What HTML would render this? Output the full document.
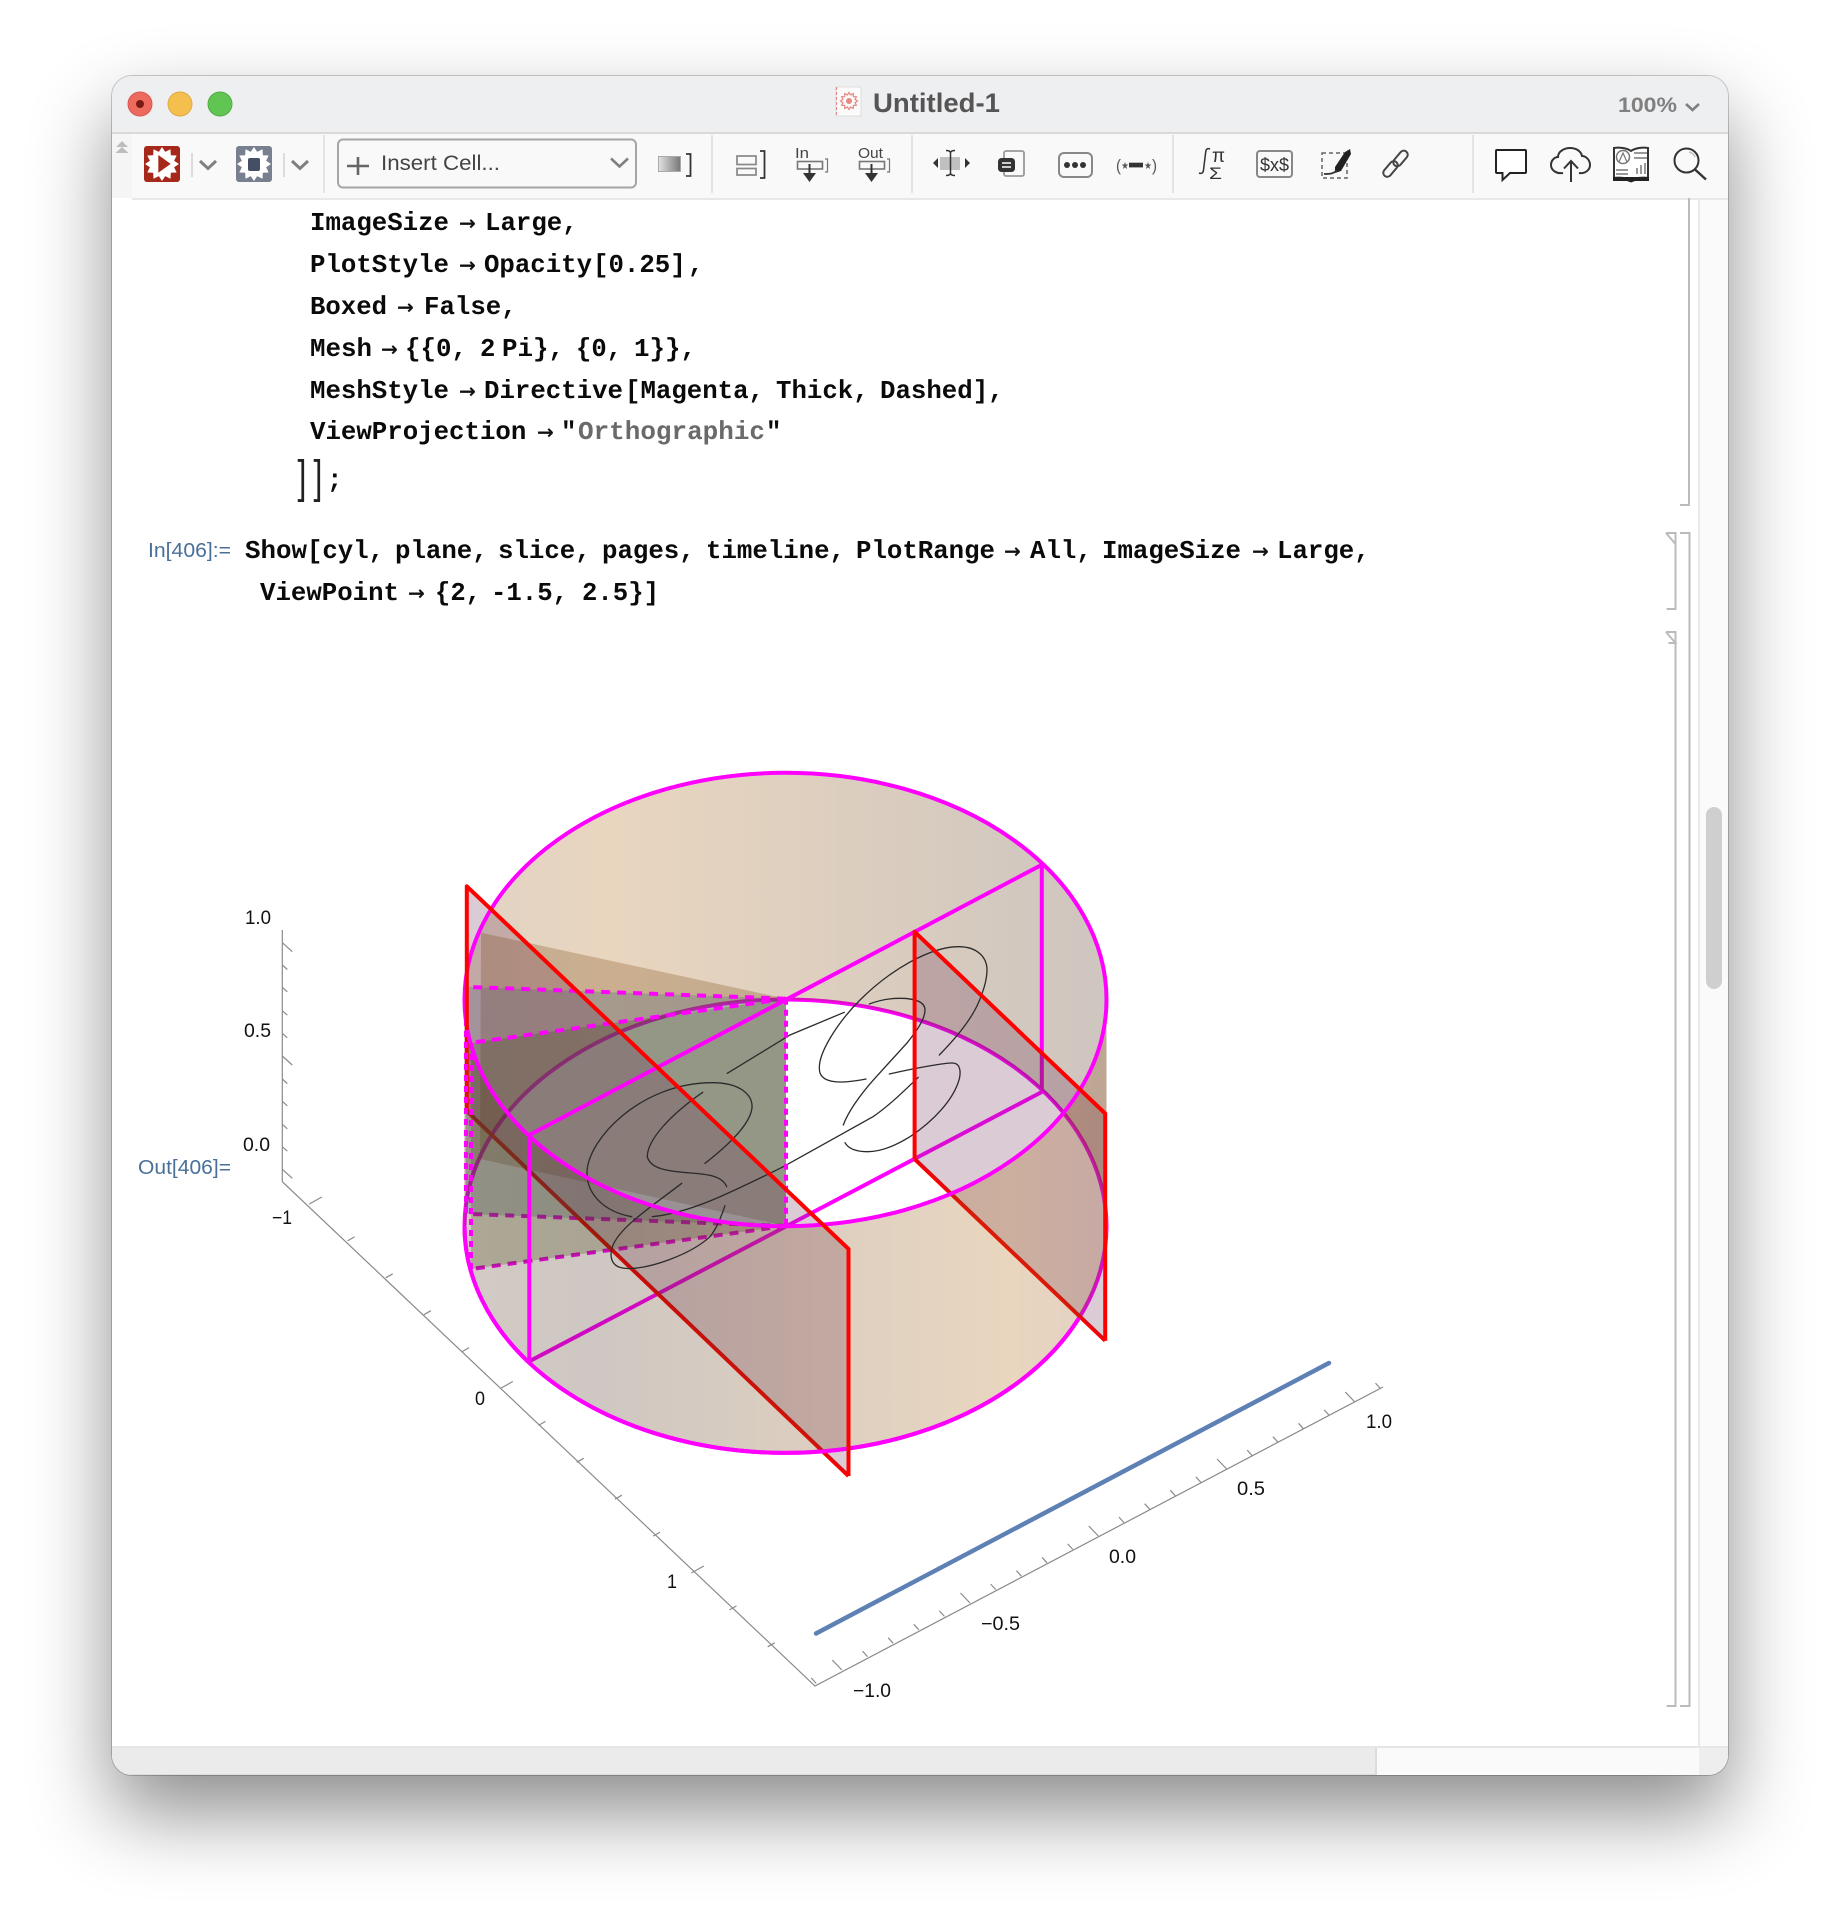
<!DOCTYPE html>
<html><head><meta charset="utf-8"><title>Untitled-1</title>
<style>
html,body{margin:0;padding:0;background:#fff;width:1840px;height:1924px;overflow:hidden}
.win{position:absolute;left:112px;top:76px;width:1616px;height:1699px;border-radius:20px;box-shadow:0 38px 80px rgba(0,0,0,.45),0 0 0 1px rgba(0,0,0,.2);background:#fff;overflow:hidden}
.win div{position:absolute}
svg{position:absolute;left:0;top:0}
.c{font:700 25.7px "Liberation Mono",monospace;fill:#0a0a0a}
.a{font:700 20px "DejaVu Sans",sans-serif;fill:#111}
.l{font:400 20px "Liberation Sans",sans-serif;fill:#4a7099}
.t{font:400 19px "Liberation Sans",sans-serif;fill:#111}
</style></head><body>
<div class="win">
<div style="left:0;top:0;width:1616px;height:56px;background:#eeeff1;border-bottom:2px solid #d9d9d9"></div>
<div style="left:0;top:58px;width:20px;height:64px;background:#f5f5f5"></div>
<div style="left:20px;top:58px;width:1596px;height:64px;background:#f9f9f9"></div>
<div style="left:20px;top:122px;width:1596px;height:2px;background:#e8e8e8"></div>
<div style="left:1586px;top:124px;width:2px;height:1548px;background:#e9e9e9"></div>
<div style="left:1588px;top:124px;width:28px;height:1548px;background:#fafafa"></div>
<div style="left:1594px;top:731px;width:16px;height:182px;border-radius:8px;background:#cfcfcf"></div>
<div style="left:0;top:1670px;width:1616px;height:2px;background:#e6e6e6"></div>
<div style="left:0;top:1672px;width:1616px;height:27px;background:#fafafa"></div>
<div style="left:0;top:1672px;width:1263px;height:26px;background:#ebebeb;border-right:2px solid #dcdcdc;border-bottom:1px solid #ddd"></div>
<div style="left:1587px;top:1672px;width:29px;height:27px;background:#eee"></div>
</div>
<svg width="1840" height="1924" viewBox="0 0 1840 1924" xmlns="http://www.w3.org/2000/svg">
<defs>
<polygon id="star" points="0,-17 3.2,-12.1 8.5,-14.7 8.8,-8.8 14.7,-8.5 12.1,-3.2 17,0 12.1,3.2 14.7,8.5 8.8,8.8 8.5,14.7 3.2,12.1 0,17 -3.2,12.1 -8.5,14.7 -8.8,8.8 -14.7,8.5 -12.1,3.2 -17,0 -12.1,-3.2 -14.7,-8.5 -8.8,-8.8 -8.5,-14.7 -3.2,-12.1"/>
<linearGradient id="gb" gradientUnits="userSpaceOnUse" x1="465" y1="0" x2="1106" y2="0">
<stop offset="0" stop-color="rgb(130,75,15)"/><stop offset=".22" stop-color="rgb(167,91,0)"/><stop offset="1" stop-color="rgb(61,26,0)"/></linearGradient>
<linearGradient id="gf" gradientUnits="userSpaceOnUse" x1="465" y1="0" x2="1106" y2="0">
<stop offset="0" stop-color="rgb(80,45,20)"/><stop offset=".2" stop-color="rgb(61,30,10)"/><stop offset=".85" stop-color="rgb(167,91,0)"/><stop offset="1" stop-color="rgb(140,70,20)"/></linearGradient>
<linearGradient id="gs" x1="0" y1="0" x2="1" y2="0"><stop offset="0" stop-color="#e2e2e2"/><stop offset="1" stop-color="#777"/></linearGradient>
</defs>

<!-- traffic lights -->
<circle cx="140" cy="104" r="12" fill="#ee6a5f" stroke="#d9584e"/><circle cx="140" cy="104" r="4" fill="#7a1a12"/>
<circle cx="180" cy="104" r="12" fill="#f5bf4f" stroke="#dfa93d"/>
<circle cx="220" cy="104" r="12" fill="#61c554" stroke="#4fae43"/>

<!-- title -->
<rect x="836" y="87" width="25" height="29" fill="#fbfbfb" stroke="#ddd"/>
<line x1="836.5" y1="87" x2="836.5" y2="115" stroke="#e08a84" stroke-width="1.2" stroke-dasharray="3 2"/>
<use href="#star" transform="translate(849,101) scale(.5)" fill="none" stroke="#e58a82" stroke-width="2.5"/>
<circle cx="849" cy="101" r="3" fill="#e58a82"/>
<text x="873" y="112" textLength="127" lengthAdjust="spacingAndGlyphs" style="font:700 27px 'Liberation Sans',sans-serif;fill:#555">Untitled-1</text>
<text x="1618" y="112" textLength="59" lengthAdjust="spacingAndGlyphs" style="font:700 21px 'Liberation Sans',sans-serif;fill:#808080">100%</text>
<path d="M1686 104l6.5 6 6.5-6" fill="none" stroke="#808080" stroke-width="2.6"/>

<!-- toolbar left -->
<path d="M122 141l6 6h-12zM122 147l6.5 6h-13z" fill="#bdbdbd"/>
<rect x="144" y="146" width="36" height="36" rx="3" fill="#a5281b"/>
<use href="#star" x="162" y="164" fill="#fff"/>
<path d="M158.3 155v17.7l12.4-8.8z" fill="#a5281b"/>
<rect x="191" y="153" width="2" height="24" fill="#dcdcdc"/>
<path d="M200 161l8 7.5 8-7.5" fill="none" stroke="#7f7f7f" stroke-width="3"/>
<rect x="236" y="146" width="36" height="36" rx="3" fill="#787f8f"/>
<use href="#star" x="254" y="164" fill="#fff"/>
<rect x="248" y="158" width="12" height="13" rx="2" fill="#444f66"/>
<rect x="283" y="153" width="2" height="24" fill="#dcdcdc"/>
<path d="M292 161l8 7.5 8-7.5" fill="none" stroke="#7f7f7f" stroke-width="3"/>
<rect x="323" y="135" width="2" height="58" fill="#e4e4e4"/>
<rect x="338" y="139.500" width="298" height="48" rx="5" fill="#f9f9f9" stroke="#a5a5a5" stroke-width="2"/>
<path d="M358 157v18M347 166h22" stroke="#666" stroke-width="2.6" fill="none"/>
<text x="381" y="170" textLength="119" lengthAdjust="spacingAndGlyphs" style="font:400 21.5px 'Liberation Sans',sans-serif;fill:#444">Insert Cell...</text>
<path d="M611 158.500l8.500 8 8.500-8" fill="none" stroke="#808080" stroke-width="2.6"/>
<rect x="658.500" y="156.500" width="22" height="15" fill="url(#gs)" stroke="#aaa"/>
<path d="M686 154h4.500v22h-4.500" fill="none" stroke="#333" stroke-width="1.8"/>
<rect x="711" y="135" width="2" height="58" fill="#e4e4e4"/>
<rect x="737" y="156" width="19" height="8.500" fill="none" stroke="#888" stroke-width="1.700"/>
<rect x="737" y="168.500" width="19" height="6.500" fill="none" stroke="#888" stroke-width="1.700"/>
<path d="M760 151h4.500v27h-4.500" fill="none" stroke="#333" stroke-width="1.8"/>
<text x="795" y="158" textLength="14" lengthAdjust="spacingAndGlyphs" style="font:400 15px 'Liberation Sans',sans-serif;fill:#444">In</text>
<rect x="797.500" y="161.500" width="25" height="7.500" fill="none" stroke="#777" stroke-width="1.6"/>
<path d="M825 159h2.500v13h-2.500" fill="none" stroke="#777" stroke-width="1.2"/>
<path d="M809.500 164v10" stroke="#333" stroke-width="2"/><path d="M803 173h13l-6.500 9z" fill="#333"/>
<text x="858" y="158" textLength="25" lengthAdjust="spacingAndGlyphs" style="font:400 15px 'Liberation Sans',sans-serif;fill:#444">Out</text>
<rect x="859.500" y="161.500" width="25" height="7.500" fill="none" stroke="#777" stroke-width="1.600"/>
<path d="M887 159h2.500v13h-2.500" fill="none" stroke="#777" stroke-width="1.200"/>
<path d="M871.500 164v10" stroke="#333" stroke-width="2"/><path d="M865 173h13l-6.500 9z" fill="#333"/>
<rect x="911" y="135" width="2" height="58" fill="#e4e4e4"/>
<path d="M938 158v10l-5-5z" fill="#333"/><path d="M965 158v10l5-5z" fill="#333"/>
<rect x="940" y="157" width="20" height="13" fill="#c0c0c0"/>
<path d="M946 150.500c2 0 4 .5 4.500 2v21c-.5 1.500-2.500 2-4.500 2M955 150.500c-2 0-4 .5-4.500 2v21c.5 1.500 2.500 2 4.500 2" fill="none" stroke="#333" stroke-width="1.500"/>
<rect x="1004" y="151" width="20" height="25" rx="2" fill="none" stroke="#999" stroke-width="1.800"/>
<rect x="998" y="158" width="17" height="14" rx="3.500" fill="#333"/>
<path d="M1002 163h9M1002 167h9" stroke="#fff" stroke-width="1.600"/>
<rect x="1059" y="153" width="33" height="24" rx="5" fill="none" stroke="#888" stroke-width="2"/>
<circle cx="1067" cy="165" r="3" fill="#333"/><circle cx="1075" cy="165" r="3" fill="#333"/><circle cx="1083" cy="165" r="3" fill="#333"/>
<text x="1116" y="171" textLength="5" lengthAdjust="spacingAndGlyphs" style="font:400 17px 'Liberation Sans',sans-serif;fill:#555">(</text>
<text x="1121" y="169" textLength="8" lengthAdjust="spacingAndGlyphs" style="font:400 10px 'DejaVu Sans',sans-serif;fill:#555">★</text>
<rect x="1129" y="162.700" width="14" height="4.700" fill="#333"/>
<text x="1144" y="169" textLength="8" lengthAdjust="spacingAndGlyphs" style="font:400 10px 'DejaVu Sans',sans-serif;fill:#555">★</text>
<text x="1152" y="171" textLength="5" lengthAdjust="spacingAndGlyphs" style="font:400 17px 'Liberation Sans',sans-serif;fill:#555">)</text>
<rect x="1172" y="135" width="2" height="58" fill="#e4e4e4"/>
<path d="M1210 149c-2.500-1-4 0-4.300 3l-2.200 18c-.3 3-2 4-4.500 3" fill="none" stroke="#333" stroke-width="1.500"/>
<text x="1212" y="162" textLength="13" lengthAdjust="spacingAndGlyphs" style="font:400 19px 'Liberation Sans',sans-serif;fill:#333">π</text>
<text x="1209" y="179" textLength="13" lengthAdjust="spacingAndGlyphs" style="font:400 17px 'Liberation Sans',sans-serif;fill:#333">Σ</text>
<rect x="1257" y="151" width="35" height="26" rx="3" fill="none" stroke="#888" stroke-width="2"/>
<text x="1260" y="171" textLength="29" lengthAdjust="spacingAndGlyphs" style="font:400 18px 'Liberation Sans',sans-serif;fill:#333">$x$</text>
<rect x="1322" y="153" width="25" height="25" fill="none" stroke="#666" stroke-width="1.500" stroke-dasharray="4 3"/>
<path d="M1350 149l1 5-10 17-6 2v-6l10-15z" fill="#222"/>
<path d="M1324 174c5 0 10 0 13-4" fill="none" stroke="#333" stroke-width="1.800"/>
<rect x="1396.500" y="149.500" width="8" height="18" rx="4" transform="rotate(40 1400.500 158.500)" fill="none" stroke="#444" stroke-width="2"/>
<rect x="1386.500" y="160" width="8" height="18" rx="4" transform="rotate(40 1390.500 169)" fill="none" stroke="#444" stroke-width="2"/>
<rect x="1472" y="135" width="2" height="58" fill="#e4e4e4"/>
<path d="M1497 150h28a1 1 0 0 1 1 1v21a1 1 0 0 1-1 1h-15l-7.500 7v-7h-5.500a1 1 0 0 1-1-1v-21a1 1 0 0 1 1-1z" fill="#fff" stroke="#222" stroke-width="2"/>
<path d="M1563 173c-7 1-12-3-12-8s4-8 7-8c0-6 7-9 12-9 6 0 11 3 12 8 4 0 8 4 8 9s-5 9-11 8" fill="none" stroke="#333" stroke-width="2"/>
<path d="M1571 161v21M1564 168.500l7-7.500 7 7.500" fill="none" stroke="#333" stroke-width="2"/>
<path d="M1631 151c-4-3-12-4-17-3v30c5-1 13 0 17 2 4-2 12-3 17-2v-30c-5-1-13 0-17 3z" fill="#fff" stroke="#333" stroke-width="2"/>
<path d="M1613 177h36v4h-14l-4 1.500-4-1.500h-14z" fill="#222"/>
<circle cx="1623" cy="157" r="6.500" fill="none" stroke="#777" stroke-width="1.500"/>
<path d="M1619 162l4-9 4 9" fill="none" stroke="#777" stroke-width="1.200"/>
<path d="M1616 170h12M1616 174h12M1634 153h13M1634 158h13" stroke="#999" stroke-width="2"/>
<path d="M1637 174v-6M1641 174v-9M1645 174v-11" stroke="#999" stroke-width="2"/>
<circle cx="1686.500" cy="160.500" r="12" fill="none" stroke="#333" stroke-width="2"/>
<path d="M1695 169.500l11 10" stroke="#333" stroke-width="2.400"/>
<path d="M1689 152c2.500.5 5 2.500 6 5" fill="none" stroke="#bbb" stroke-width="1.500"/>

<!-- code -->
<g>
<text class="c" x="310" y="230" textLength="139" lengthAdjust="spacingAndGlyphs">ImageSize</text><text class="a" x="459" y="230" textLength="17" lengthAdjust="spacingAndGlyphs">→</text><text class="c" x="485" y="230" textLength="92.700" lengthAdjust="spacingAndGlyphs">Large,</text>
<text class="c" x="310" y="272" textLength="139" lengthAdjust="spacingAndGlyphs">PlotStyle</text><text class="a" x="459" y="272" textLength="17" lengthAdjust="spacingAndGlyphs">→</text><text class="c" x="484" y="272" textLength="108" lengthAdjust="spacingAndGlyphs">Opacity</text><text class="c" x="593" y="272" textLength="92.700" lengthAdjust="spacingAndGlyphs">[0.25]</text><text class="c" x="688" y="272" textLength="15.400" lengthAdjust="spacingAndGlyphs">,</text>
<text class="c" x="310" y="314" textLength="77" lengthAdjust="spacingAndGlyphs">Boxed</text><text class="a" x="397" y="314" textLength="17" lengthAdjust="spacingAndGlyphs">→</text><text class="c" x="424" y="314" textLength="92.700" lengthAdjust="spacingAndGlyphs">False,</text>
<text class="c" x="310" y="356" textLength="62" lengthAdjust="spacingAndGlyphs">Mesh</text><text class="a" x="381" y="356" textLength="17" lengthAdjust="spacingAndGlyphs">→</text><text class="c" x="405" y="356" textLength="62" lengthAdjust="spacingAndGlyphs">{{0,</text><text class="c" x="480" y="356" textLength="15.400" lengthAdjust="spacingAndGlyphs">2</text><text class="c" x="502" y="356" textLength="62" lengthAdjust="spacingAndGlyphs">Pi},</text><text class="c" x="576" y="356" textLength="46" lengthAdjust="spacingAndGlyphs">{0,</text><text class="c" x="634" y="356" textLength="62" lengthAdjust="spacingAndGlyphs">1}},</text>
<text class="c" x="310" y="398" textLength="139" lengthAdjust="spacingAndGlyphs">MeshStyle</text><text class="a" x="459" y="398" textLength="17" lengthAdjust="spacingAndGlyphs">→</text><text class="c" x="484" y="398" textLength="139" lengthAdjust="spacingAndGlyphs">Directive</text><text class="c" x="625" y="398" textLength="139" lengthAdjust="spacingAndGlyphs">[Magenta,</text><text class="c" x="776" y="398" textLength="92.700" lengthAdjust="spacingAndGlyphs">Thick,</text><text class="c" x="880" y="398" textLength="123.600" lengthAdjust="spacingAndGlyphs">Dashed],</text>
<text class="c" x="310" y="439" textLength="216.300" lengthAdjust="spacingAndGlyphs">ViewProjection</text><text class="a" x="537" y="439" textLength="17" lengthAdjust="spacingAndGlyphs">→</text><text class="c" x="561" y="439" textLength="15.400" lengthAdjust="spacingAndGlyphs">"</text><text class="c" x="578" y="439" textLength="187" lengthAdjust="spacingAndGlyphs" style="fill:#6a6a6a">Orthographic</text><text class="c" x="766" y="439" textLength="15.400" lengthAdjust="spacingAndGlyphs">"</text>
<text transform="translate(297.500,492.300) scale(1,1.440)" style="font:400 32px 'Liberation Sans',sans-serif;fill:#222">]</text>
<text transform="translate(313.500,492.300) scale(1,1.440)" style="font:400 32px 'Liberation Sans',sans-serif;fill:#222">]</text>
<text class="c" x="327" y="487" textLength="15.400" lengthAdjust="spacingAndGlyphs">;</text>
<text class="l" x="148" y="557" textLength="83" lengthAdjust="spacingAndGlyphs">In[406]:=</text>
<text class="c" x="245" y="558" textLength="62" lengthAdjust="spacingAndGlyphs">Show</text><text class="c" x="307" y="558" textLength="77" lengthAdjust="spacingAndGlyphs">[cyl,</text><text class="c" x="395" y="558" textLength="92.700" lengthAdjust="spacingAndGlyphs">plane,</text><text class="c" x="498" y="558" textLength="92.700" lengthAdjust="spacingAndGlyphs">slice,</text><text class="c" x="602" y="558" textLength="92.700" lengthAdjust="spacingAndGlyphs">pages,</text><text class="c" x="706" y="558" textLength="139" lengthAdjust="spacingAndGlyphs">timeline,</text><text class="c" x="856" y="558" textLength="139" lengthAdjust="spacingAndGlyphs">PlotRange</text><text class="a" x="1004" y="558" textLength="17" lengthAdjust="spacingAndGlyphs">→</text><text class="c" x="1030" y="558" textLength="61.800" lengthAdjust="spacingAndGlyphs">All,</text><text class="c" x="1102" y="558" textLength="139" lengthAdjust="spacingAndGlyphs">ImageSize</text><text class="a" x="1252" y="558" textLength="17" lengthAdjust="spacingAndGlyphs">→</text><text class="c" x="1277" y="558" textLength="92.700" lengthAdjust="spacingAndGlyphs">Large,</text>
<text class="c" x="260" y="600" textLength="139" lengthAdjust="spacingAndGlyphs">ViewPoint</text><text class="a" x="408" y="600" textLength="17" lengthAdjust="spacingAndGlyphs">→</text><text class="c" x="435" y="600" textLength="46" lengthAdjust="spacingAndGlyphs">{2,</text><text class="c" x="491" y="600" textLength="77" lengthAdjust="spacingAndGlyphs">-1.5,</text><text class="c" x="582" y="600" textLength="77" lengthAdjust="spacingAndGlyphs">2.5}]</text>
<text class="l" x="138" y="1174" textLength="93" lengthAdjust="spacingAndGlyphs">Out[406]=</text>
</g>

<!-- cell brackets -->
<g fill="none" stroke="#bbb" stroke-width="2">
<path d="M1689 198V505h-9"/>
<path d="M1680 533h9.500V1706h-9.500"/>
<path d="M1666 533h9.500V609h-9"/><path d="M1666 533l9.500 11"/>
<path d="M1666 632h9.500V1706h-9"/><path d="M1666 632l9.500 11h-7"/>
</g>

<!-- axes -->
<g fill="none" stroke="#8a8a8a" stroke-width="1.200">
<path d="M282.300 930V1181.700L815 1686 1383 1387"/>
<path d="M282.300 942.700l10 9M282.300 965l5 4.500M282.300 987.300l5 4.500M282.300 1010.700l5 4.500M282.300 1033.300l5 4.500M282.300 1056l10 9M282.300 1079l5 4.500M282.300 1101.300l5 4.500M282.300 1124.300l5 4.500M282.300 1146.700l5 4.500M282.300 1169.300l10 9"/>
<path d="M309.300 1204l12.500-7M347.500 1240.900l7-4M385.700 1277.800l7-4M423.900 1314.700l7-4M462.100 1351.600l7-4M500.300 1388.500l12.500-7M538.500 1425.400l7-4M576.700 1462.300l7-4M614.900 1499.200l7-4M653.100 1536.100l7-4M691.300 1573l12.500-7M729.500 1609.900l7-4M767.700 1646.800l7-4"/>
<path d="M816.200 1683.400l-5-5.500M841.800 1670l-9.500-10M867.500 1656.600l-5-5.500M893.100 1643.200l-5-5.500M918.800 1629.800l-5-5.500M944.400 1616.400l-5-5.500M970 1603l-9.500-10M995.700 1589.600l-5-5.500M1021.400 1576.200l-5-5.500M1047 1562.800l-5-5.500M1072.700 1549.400l-5-5.500M1098.300 1536l-9.500-10M1124 1522.600l-5-5.500M1149.600 1509.200l-5-5.500M1175.300 1495.800l-5-5.500M1200.900 1482.400l-5-5.500M1226.600 1469l-9.500-10M1252.200 1455.600l-5-5.500M1277.900 1442.200l-5-5.500M1303.500 1428.800l-5-5.500M1329.200 1415.400l-5-5.500M1354.800 1402l-9.500-10M1380.500 1388.600l-5-5.500"/>
</g>
<text class="t" x="245" y="924" textLength="26" lengthAdjust="spacingAndGlyphs">1.0</text>
<text class="t" x="244" y="1037" textLength="27" lengthAdjust="spacingAndGlyphs">0.5</text>
<text class="t" x="243" y="1151" textLength="27" lengthAdjust="spacingAndGlyphs">0.0</text>
<text class="t" x="272" y="1224" textLength="20" lengthAdjust="spacingAndGlyphs">−1</text>
<text class="t" x="475" y="1405" textLength="10" lengthAdjust="spacingAndGlyphs">0</text>
<text class="t" x="667" y="1588" textLength="10" lengthAdjust="spacingAndGlyphs">1</text>
<text class="t" x="1366" y="1428" textLength="26" lengthAdjust="spacingAndGlyphs">1.0</text>
<text class="t" x="1237" y="1495" textLength="28" lengthAdjust="spacingAndGlyphs">0.5</text>
<text class="t" x="1109" y="1563" textLength="27" lengthAdjust="spacingAndGlyphs">0.0</text>
<text class="t" x="981" y="1630" textLength="39" lengthAdjust="spacingAndGlyphs">−0.5</text>
<text class="t" x="853" y="1697" textLength="38" lengthAdjust="spacingAndGlyphs">−1.0</text>
<path d="M816 1633.500L1329 1363" stroke="#5e81b5" stroke-width="4.500" stroke-linecap="round"/>

<!-- behind translucent surfaces -->
<g fill="none" stroke="#ff00ff" stroke-width="4">
<ellipse cx="785.500" cy="1226.200" rx="321" ry="226.700"/>
<path d="M1041.800 1092L529.300 1361.300"/>
<path d="M1041.800 1052V1092"/>
<path d="M786 1226L471 1214M786 1226L471 1269" stroke-dasharray="9 7"/>
</g>
<g fill="none" stroke="#ff0000" stroke-width="4">
<path d="M466.800 1111.100L848.500 1476"/>
<path d="M914.600 1159L1105.200 1340.700"/>
</g>

<!-- surfaces -->
<g fill-opacity=".25">
<path fill="url(#gb)" d="M464.500 999.500A321 226.700 0 0 1 1106.500 999.500L1106.500 1226.200A321 226.700 0 0 0 464.500 1226.200Z"/>
<path fill="rgb(113,60,0)" d="M481 932.700L786 998.700V1226L480 1159Z"/>
<path fill="rgb(60,90,130)" d="M786 998.700L466 986.800V1214L786 1226Z"/>
<path fill="rgb(56,70,6)" d="M786 998.700L471 1043V1269L786 1226Z"/>
<path fill="rgb(107,47,83)" d="M466.800 886.300L848.500 1248.900V1476L466.800 1111.100Z"/>
<path fill="rgb(107,47,83)" d="M914.600 931.800L1105.200 1113.500V1340.700L914.600 1159Z"/>
<path fill="url(#gf)" d="M464.500 999.500A321 226.700 0 0 0 1106.500 999.500L1106.500 1226.200A321 226.700 0 0 1 464.500 1226.200Z"/>
</g>

<!-- curves -->
<g fill="none" stroke="#2b2b2b" stroke-width="1.300" stroke-linecap="round">
<path d="M631.700 1216.700C605 1212 587 1195 587 1173C587 1140 640 1083 712 1082.700C740 1082.500 753 1095 752 1108C750 1125 726 1147 705 1163.300"/>
<path d="M702.700 1092.300C670 1115 647.300 1140 647.300 1156.700C650 1168 665 1171 686.700 1172.700C705 1174 722 1175 726.700 1186.700"/>
<path d="M681.700 1183.300C650 1208 611 1232 611 1254C611 1263 616 1268.500 628 1268.500C650 1268.500 690 1255 710 1236.700C717 1228 721 1217 725 1205.700"/>
<path d="M652.300 1216.700C690 1213 730 1193 783.300 1166.700L873 1116.700C890 1105 905 1090 918.300 1077.300"/>
<path d="M727.300 1073.300L790 1035L844.300 1012.300"/>
<path d="M869.300 1004C880 1000 890 998.300 900 998.300C915 998.300 925 1002 925 1010C925 1020 915 1033 906.700 1043.300L873.300 1080C860 1095 848 1112 843.300 1125"/>
<path d="M866 1079C850 1082 825 1086 820 1073C815 1055 840 1020 860 1000C890 970 930 947 958 946.700C978 946.500 987 958 987 970C987 985 978 1005 973 1013.300C965 1027 952 1042 939.300 1055"/>
<path d="M889.300 1074C920 1067 945 1063 952 1063C962 1063 961 1075 958 1083C952 1100 935 1120 910 1136.700C895 1146 880 1152 866.700 1151.700C855 1151.500 848 1148 845 1142.700"/>
</g>

<path d="M466.800 1030V1111" stroke="#e81000" stroke-width="4" fill="none"/>

<!-- front magenta -->
<g fill="none" stroke="#ff00ff" stroke-width="4">
<path d="M464.500 1226.200A321 226.700 0 0 0 1079 1318"/>
<path d="M529.300 1135V1361.300"/>
<path d="M1041.800 864.800V1052"/>
<path d="M1041.800 864.800L529.300 1135"/>
<ellipse cx="785.500" cy="999.500" rx="321" ry="226.700"/>
<path d="M786 998.700L464.600 986.800M786 998.700L470 1043" stroke-dasharray="9 7"/>
<path d="M786 998.700V1226M466 987V1214M471 1043V1269" stroke-dasharray="6 5"/>
</g>
<g fill="none" stroke="#ff0000" stroke-width="4" stroke-linejoin="round">
<path d="M466.800 1030V886.300L848.500 1248.900V1476"/>
<path d="M914.600 1159V931.800L1105.200 1113.500V1340.700"/>
</g>
</svg>
</body></html>
